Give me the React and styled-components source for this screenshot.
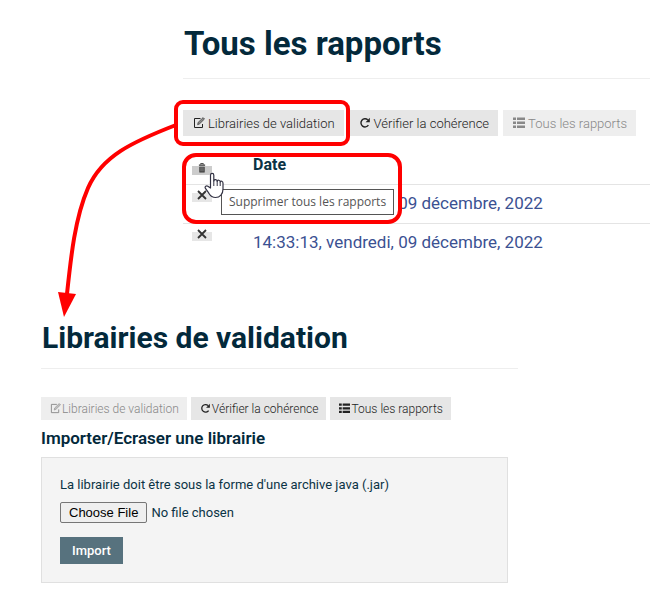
import styled, { createGlobalStyle } from "styled-components"


const GlobalStyle = createGlobalStyle`
    *{
        box-sizing: border-box;
    }
    body{
        margin: 0;
        background: #fff;
        color: #0b3345;
        font-family: Roboto, "Liberation Sans", sans-serif;
    }
`;

const Page = styled.main`
    position: relative;
    padding-top: 24px;
    overflow: hidden;
`;

const Reports = styled.section`
    margin-left: 183px;
`;

const Libraries = styled.section`
    margin: 56px 132px 0 41px;
`;

const Title = styled.h1`
    margin: 0;
    padding: ${({ $small }) => ($small ? "0 0 10px 1px" : "0 0 14px 1px")};
    border-bottom: 1px solid #eee;
    font-size: ${({ $small }) => ($small ? "30px" : "33px")};
    line-height: 40px;
    font-weight: 700;
    color: #03293b;
`;

const Toolbar = styled.div`
    display: flex;
    gap: ${({ $small }) => ($small ? "4px" : "5px")};
    margin-top: ${({ $small }) => ($small ? "28px" : "31px")};
`;

const ToolButton = styled.button`
    display: flex;
    align-items: center;
    gap: ${({ $small }) => ($small ? "1px" : "3px")};
    height: ${({ $small }) => ($small ? "23px" : "26px")};
    padding: ${({ $small }) => ($small ? "0 8px 0 9px" : "0 9px 0 10px")};
    border: 0;
    background: #e6e6e6;
    color: #222;
    font-family: inherit;
    font-size: ${({ $small }) => ($small ? "12px" : "13px")};
    font-weight: 300;
    white-space: nowrap;
    cursor: pointer;

    svg{
        width: ${({ $small }) => ($small ? "11px" : "12px")};
        height: ${({ $small }) => ($small ? "11px" : "12px")};
    }

    &:disabled{
        background: #eee;
        color: #888;
        cursor: default;
    }
`;

const Table = styled.table`
    width: 100%;
    margin-top: 9px;
    border-collapse: collapse;
    font-size: 17px;
    line-height: 20px;

    th, td{
        height: 39px;
        padding: 8px;
        text-align: left;
        vertical-align: top;
        border-bottom: 1px solid #e4e4e4;
    }
    th:first-child, td:first-child{
        width: 62px;
    }
    tr:last-child td{
        border-bottom: 0;
    }
    thead th{
        padding-top: 10px;
        padding-bottom: 0;
        font-size: 16px;
    }
    a{
        color: #3b5192;
        text-decoration: none;
    }
`;

const RowButton = styled.button`
    display: flex;
    align-items: center;
    justify-content: center;
    width: 20px;
    height: 9px;
    margin-top: ${({ $hover }) => ($hover ? "11px" : "0")};
    margin-left: 1px;
    padding: 0;
    border: 0;
    background: ${({ $hover }) => ($hover ? "#ccc" : "#e6e6e6")};
    color: #333;
    cursor: pointer;

    svg{
        flex: none;
        margin-bottom: 5px;
    }
`;

const Tooltip = styled.div`
    position: absolute;
    top: 189px;
    left: 221px;
    padding: 0 7px;
    border: 1px solid #555;
    background: #fff;
    color: #555;
    font-family: "Open Sans", "Noto Sans", sans-serif;
    font-size: 12px;
    line-height: 24px;
    white-space: nowrap;
`;

const Overlay = styled.svg`
    position: absolute;
    top: 0;
    left: 0;
    pointer-events: none;
`;

const SubTitle = styled.h2`
    margin: 8px 0 9px;
    font-size: 17px;
    line-height: 20px;
    font-weight: 600;
    color: #03293b;
`;

const Panel = styled.form`
    display: flex;
    flex-direction: column;
    align-items: flex-start;
    margin-right: 10px;
    padding: 18px;
    border: 1px solid #e0e0e0;
    background: #f4f4f4;
    font-size: 13px;

    label{
        line-height: 18px;
    }
`;

const FileInput = styled.input`
    margin: 8px 0 14px;
    color: #0b3345;
    font-family: inherit;
    font-size: 13px;
    line-height: 21px;

    &::file-selector-button{
        height: 21px;
        margin-right: 4px;
        padding: 0 8px;
        border: 1px solid #767676;
        border-radius: 2px;
        background: #efefef;
        color: #000;
        font-family: "Liberation Sans", sans-serif;
        font-size: 13px;
    }
`;

const ImportButton = styled.button`
    height: 27px;
    padding: 0 12px;
    border: 0;
    background: #57727e;
    color: #fff;
    font-family: inherit;
    font-size: 13px;
    font-weight: 500;
    cursor: pointer;
`;


const EditIcon = () => (
    <svg viewBox="0 0 12 12" fill="none" stroke="currentColor" aria-hidden="true">
        <path d="M7.500 1.500H1.500V10.500H9.500V7" />
        <path d="M4.600 7.700l.5-2.300 5-4.800 1.400 1.400-5 4.900z" fill="currentColor" fillOpacity=".45" strokeWidth=".6" />
    </svg>
)

const RepeatIcon = () => (
    <svg viewBox="0 0 12 12" fill="none" stroke="currentColor" aria-hidden="true">
        <path d="M9.400 8.200A4.100 4.100 0 1 1 8.800 2.800" strokeWidth="1.400" />
        <path d="M10.800.8v4.400H6.600z" fill="currentColor" stroke="none" />
    </svg>
)

const ListIcon = () => (
    <svg viewBox="0 0 12 12" fill="currentColor" aria-hidden="true">
        <path d="M0 .5h3v2.500H0zM4 .5h8v2.500H4zM0 4.500h3V7H0zM4 4.500h8V7H4zM0 8.500h3V11H0zM4 8.500h8V11H4z" />
    </svg>
)

const TrashIcon = () => (
    <svg width="8" height="10" viewBox="0 0 9 11" aria-hidden="true">
        <path d="M3 1.500V.5h3v1" fill="none" stroke="currentColor" />
        <path d="M1 1.500h7v1.500H1zM1.500 4h6v6.500h-6z" fill="currentColor" />
        <path d="M3.400 4.500v5M5.600 4.500v5" stroke="#bbb" strokeWidth=".8" />
    </svg>
)

const RemoveIcon = () => (
    <svg width="10" height="10" viewBox="0 0 10 10" aria-hidden="true">
        <path d="M1 1l8 8M9 1L1 9" stroke="currentColor" strokeWidth="1.800" />
    </svg>
)


function Tools({ current, small }) {
  return (
    <Toolbar $small={small}>
        <ToolButton type="button" $small={small} disabled={current === "libraries"}>
            <EditIcon/>
            Librairies de validation
        </ToolButton>
        <ToolButton type="button" $small={small}>
            <RepeatIcon/>
            Vérifier la cohérence
        </ToolButton>
        <ToolButton type="button" $small={small} disabled={current === "reports"}>
            <ListIcon/>
            Tous les rapports
        </ToolButton>
    </Toolbar>
  )
}

// highlight frames, arrow and hand pointer drawn over the page
function Annotations() {
  return (
    <Overlay width="420" height="330" viewBox="0 0 420 330" aria-hidden="true">
        <g fill="none" stroke="#f00" strokeWidth="4">
            <rect x="176" y="102" width="172" height="42" rx="7" />
            <rect x="184" y="155" width="216" height="67" rx="12" />
            <path d="M176 125C132 142 102 156 88 188C75 218 71 256 67 294" />
        </g>
        <path d="M58 292l18 2-12 23z" fill="#f00" />
        <path
            d="M210.500 188V175.200C210.500 172.900 213.800 172.900 213.800 175.200V181C214 178.900 217.200 179.200 217.200 181.300C217.600 179.600 220.200 180 220.200 182C220.800 180.500 223 181.200 223 183.300V189C223 194 220 197.500 215.500 197.500C211.500 197.500 210.200 195.500 208.800 193.200L205.300 188.200C204.300 186.500 206.500 185.200 207.900 186.200Z"
            fill="#fff"
            stroke="#334"
            strokeWidth="1.200"
            strokeLinejoin="round"
        />
        <path d="M213.800 180.500v5.500M217.200 181v5M220.200 182v4" stroke="#334" />
    </Overlay>
  )
}


function App() {
  return (
    <Page>
        <GlobalStyle/>
        <Reports>
            <Title>Tous les rapports</Title>
            <Tools current="reports"/>
            <Table>
                <thead>
                    <tr>
                        <th>
                            <RowButton type="button" $hover aria-label="Supprimer tous les rapports">
                                <TrashIcon/>
                            </RowButton>
                        </th>
                        <th>Date</th>
                    </tr>
                </thead>
                <tbody>
                    <tr>
                        <td><RowButton type="button" aria-label="Supprimer"><RemoveIcon/></RowButton></td>
                        <td><a href="#rapport-1">14:33:13, vendredi, 09 décembre, 2022</a></td>
                    </tr>
                    <tr>
                        <td><RowButton type="button" aria-label="Supprimer"><RemoveIcon/></RowButton></td>
                        <td><a href="#rapport-2">14:33:13, vendredi, 09 décembre, 2022</a></td>
                    </tr>
                </tbody>
            </Table>
        </Reports>

        <Libraries>
            <Title $small>Librairies de validation</Title>
            <Tools current="libraries" small/>
            <SubTitle>Importer/Ecraser une librairie</SubTitle>
            <Panel>
                <label htmlFor="jar">La librairie doit être sous la forme d'une archive java (.jar)</label>
                <FileInput id="jar" type="file" accept=".jar"/>
                <ImportButton type="button">Import</ImportButton>
            </Panel>
        </Libraries>

        <Tooltip role="tooltip">Supprimer tous les rapports</Tooltip>
        <Annotations/>
    </Page>
  )
}


export default App
